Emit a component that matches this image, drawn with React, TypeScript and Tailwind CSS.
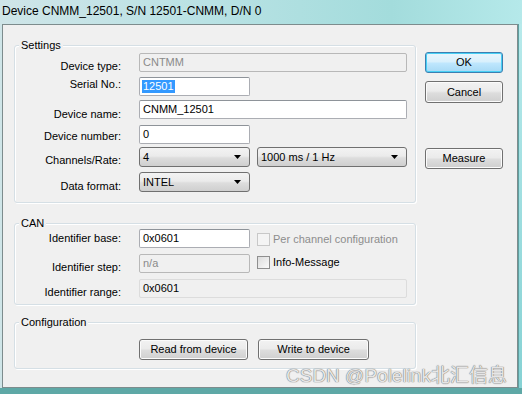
import React from 'react';

const FONT = "font-['Liberation_Sans','Noto_Sans_CJK_SC',sans-serif]";

interface TextBoxProps {
    value: string;
    width: string;
    disabled?: boolean;
    readOnly?: boolean;
    selected?: boolean;
}

const TextBox: React.FC<TextBoxProps> = ({ value, width, disabled, readOnly, selected }) => {
    let cls = 'bg-white border-[#abadb3] border-t-[#8e9399] text-black';
    if (disabled) cls = 'bg-[#f0f0f0] border-[#b8b8b8] text-[#8a8a8a]';
    if (readOnly) cls = 'bg-[#f0f0f0] border-[#dcdcdc] text-black';
    return (
        <div className={`${width} h-[19px] border rounded-[2px] flex items-center pl-[2px] ${cls}`}>
            {selected ? (
                <span className="bg-[#3399ff] text-white px-[1px] leading-[13px]">{value}</span>
            ) : (
                <span className="leading-[13px] pl-[1px]">{value}</span>
            )}
        </div>
    );
};

const Select: React.FC<{ value: string; width: string }> = ({ value, width }) => (
    <div className={`${width} h-[20px] border border-[#707070] rounded-[3px] flex items-center justify-between pl-[3px] pr-[8px] bg-[linear-gradient(#f3f3f3_0%,#ebebeb_45%,#dddddd_55%,#cfcfcf_100%)]`}>
        <span className="leading-[13px]">{value}</span>
        <svg width="7" height="4" viewBox="0 0 7 4">
            <path d="M0 0h7L3.5 4z" fill="#000" />
        </svg>
    </div>
);

const Button: React.FC<{ children: React.ReactNode; width: string; primary?: boolean; height?: string }> = ({ children, width, primary, height = 'h-[21px]' }) => {
    const cls = primary
        ? 'border-[#3c7fb1] shadow-[inset_0_0_0_1px_#48d0f5] bg-[linear-gradient(#eaf6fd_0%,#d9f0fc_45%,#bee6fd_55%,#a7d9f5_100%)]'
        : 'border-[#707070] shadow-[inset_0_0_0_1px_#fbfbfb] bg-[linear-gradient(#f2f2f2_0%,#ebebeb_45%,#dddddd_55%,#cfcfcf_100%)]';
    return (
        <div className={`${width} ${height} border rounded-[3px] flex items-center justify-center text-[11px] text-black ${cls}`}>
            {children}
        </div>
    );
};

const Checkbox: React.FC<{ label: string; disabled?: boolean }> = ({ label, disabled }) => (
    <div className="flex items-center">
        <div className={`w-[13px] h-[13px] border ${disabled ? 'border-[#c8c8c8] bg-[#f4f4f4]' : 'border-[#8f8f8f] bg-[linear-gradient(135deg,#dcdcdc,#fafafa)]'}`} />
        <span className={`ml-[3px] leading-[13px] ${disabled ? 'text-[#8d8d8d]' : 'text-black'}`}>{label}</span>
    </div>
);

const GroupBox: React.FC<{ title: string; height: string; className?: string; children: React.ReactNode }> = ({ title, height, className = '', children }) => (
    <div className={`relative ${height} border border-[#d5dfe5] rounded-[3px] shadow-[inset_1px_1px_0_#ffffff,1px_1px_0_#ffffff] ${className}`}>
        <span className="absolute left-[4px] -top-[8px] px-[2px] bg-[#f0f0f0] leading-[14px]">{title}</span>
        {children}
    </div>
);

const Row: React.FC<{ label: string; labelPad: string; className?: string; children: React.ReactNode }> = ({ label, labelPad, className = '', children }) => (
    <div className={`flex items-start h-[19px] ${className}`}>
        <div className={`w-[106px] text-right leading-[13px] ${labelPad}`}>{label}</div>
        <div className="ml-[18px] flex items-start gap-[7px]">{children}</div>
    </div>
);

export default function App() {
    return (
        <div className={`relative w-[522px] h-[394px] overflow-hidden flex flex-col text-[11px] text-black ${FONT} bg-[linear-gradient(90deg,#cfe5e8_0%,#b9e2e4_40%,#a3dcdc_75%,#b5e9ea_100%)]`}>
            <div className="h-[24px] pl-[2px] pt-[4px] text-[12px] leading-[15px] text-black">
                Device CNMM_12501, S/N 12501-CNMM, D/N 0
            </div>
            <div className="flex">
                <div className="ml-[2px] w-[516px] h-[364px] border border-[#7d8c8d] bg-[#f0f0f0] flex pl-[11px]">
                    <div className="w-[402px] pt-[20px] flex flex-col">
                        <GroupBox title="Settings" height="h-[158px]" className="pt-[7px]">
                            <Row label="Device type:" labelPad="pt-[7px]">
                                <TextBox value="CNTMM" width="w-[268px]" disabled />
                            </Row>
                            <Row label="Serial No.:" labelPad="pt-[1px]" className="mt-[5px]">
                                <TextBox value="12501" width="w-[111px]" selected />
                            </Row>
                            <Row label="Device name:" labelPad="pt-[8px]" className="mt-[4px]">
                                <TextBox value="CNMM_12501" width="w-[268px]" />
                            </Row>
                            <Row label="Device number:" labelPad="pt-[5px]" className="mt-[6px]">
                                <TextBox value="0" width="w-[111px]" />
                            </Row>
                            <Row label="Channels/Rate:" labelPad="pt-[7px]" className="mt-[3px]">
                                <Select value="4" width="w-[111px]" />
                                <Select value="1000 ms / 1 Hz" width="w-[150px]" />
                            </Row>
                            <Row label="Data format:" labelPad="pt-[8px]" className="mt-[6px]">
                                <Select value="INTEL" width="w-[111px]" />
                            </Row>
                        </GroupBox>
                        <GroupBox title="CAN" height="h-[82px]" className="mt-[20px] pt-[5px]">
                            <Row label="Identifier base:" labelPad="pt-[3px]">
                                <TextBox value="0x0601" width="w-[111px]" />
                                <div className="pt-[4px]">
                                    <Checkbox label="Per channel configuration" disabled />
                                </div>
                            </Row>
                            <Row label="Identifier step:" labelPad="pt-[7px]" className="mt-[6px]">
                                <TextBox value="n/a" width="w-[111px]" disabled />
                                <div className="pt-[2px]">
                                    <Checkbox label="Info-Message" />
                                </div>
                            </Row>
                            <Row label="Identifier range:" labelPad="pt-[7px]" className="mt-[6px]">
                                <TextBox value="0x0601" width="w-[268px]" readOnly />
                            </Row>
                        </GroupBox>
                        <GroupBox title="Configuration" height="h-[47px]" className="mt-[17px] pt-[16px]">
                            <div className="flex ml-[124px] gap-[10px]">
                                <Button width="w-[109px]">Read from device</Button>
                                <Button width="w-[111px]">Write to device</Button>
                            </div>
                        </GroupBox>
                    </div>
                    <div className="ml-[9px] w-[78px] pt-[27px] flex flex-col">
                        <Button width="w-[78px]" primary>OK</Button>
                        <div className="mt-[8px]">
                            <Button width="w-[78px]" height="h-[22px]">Cancel</Button>
                        </div>
                        <div className="mt-[45px]">
                            <Button width="w-[78px]">Measure</Button>
                        </div>
                    </div>
                </div>
                <div className="flex-1 border-l border-[#5f9fa0] bg-[linear-gradient(#b7eaeb,#86d2d4)]" />
            </div>
            <div className="flex-1 bg-[#5ea8a6]" />
            <div className="absolute left-[286px] top-[364px] text-[19px] leading-[23px] text-[#e6e6e6] [text-shadow:0_0_1px_#707070,0_0_1px_#707070]">
                CSDN @Polelink北汇信息
            </div>
        </div>
    );
}
